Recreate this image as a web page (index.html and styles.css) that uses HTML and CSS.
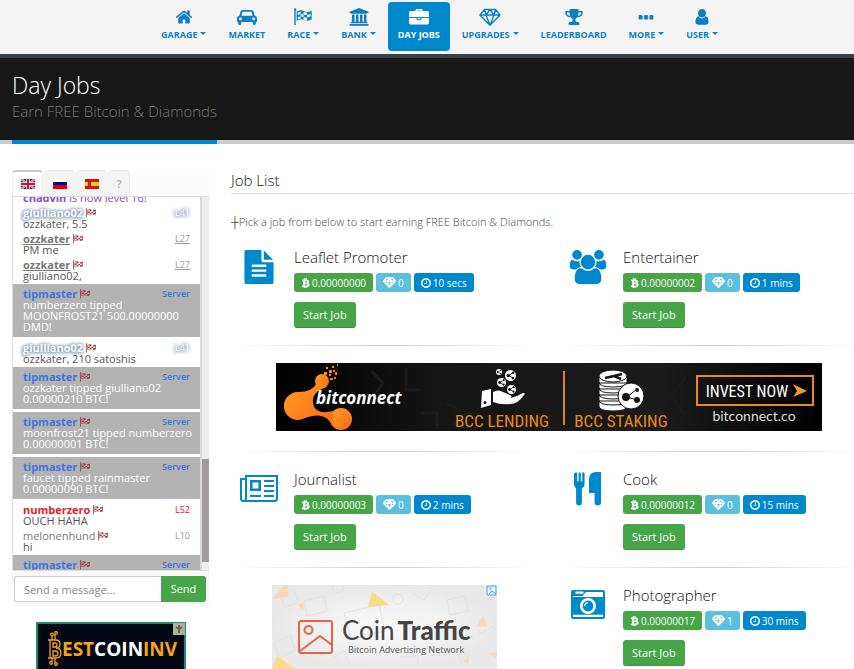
FILE: index.html
```html
<!DOCTYPE html>
<html lang="en">
<head>
<meta charset="utf-8">
<meta name="viewport" content="width=device-width, initial-scale=1">
<title>Day Jobs</title>
<link rel="stylesheet" href="styles.css">
</head>
<body>
<svg class="sprite" aria-hidden="true">
  <symbol id="home" viewBox="0 0 1792 1792"><path d="M1472 992v480q0 26-19 45t-45 19h-384v-384h-256v384h-384q-26 0-45-19t-19-45v-480q0-1 .5-3t.5-3l575-474 575 474q1 2 1 6zm223-69l-62 74q-8 9-21 11h-3q-13 0-21-7l-692-577-692 577q-12 8-24 7-13-2-21-11l-62-74q-8-10-7-23.5t11-21.5l719-599q32-26 76-26t76 26l244 204v-195q0-14 9-23t23-9h192q14 0 23 9t9 23v408l219 182q10 8 11 21.5t-7 23.5z"/></symbol>
  <symbol id="car" viewBox="0 0 20 18"><path fill-rule="evenodd" d="M5.500 2h9q1.600 0 2 1.500l1.200 4.300Q20 8 20 10.300V14h-1.200v1.500a1.500 1.500 0 0 1-3 0V14H4.200v1.500a1.500 1.500 0 0 1-3 0V14H0v-3.700Q0 8 2.300 7.800L3.500 3.500Q3.900 2 5.500 2zM4.500 7.800h11l-.9-3.600q-.1-.4-.5-.4H5.900q-.4 0-.5.4zM3.400 9.500a1.400 1.400 0 1 0 0 2.800 1.400 1.400 0 0 0 0-2.800zm13.200 0a1.400 1.400 0 1 0 0 2.800 1.400 1.400 0 0 0 0-2.800z"/></symbol>
  <symbol id="flag" viewBox="0 0 20 18"><path d="M1 1.500a1.200 1.200 0 1 1 1.700 1.100V17H1.300V2.600z"/><path fill-rule="evenodd" d="M3.600 3.600Q8 1 11 3t7.700-.3v8.600Q15 13.800 11.500 12t-7.900.8zM4.700 4.400v2.500l3-1V3.500zM10.500 4v2.600l3.500.5V4.400zM7.700 5.900v2.700l2.900.5V6.500zM14 7.100v2.500l3.500-1.200V6zM4.700 9v2.400l3-1V8.600zM10.600 9.100v2.500l3.400.8V9.700z"/></symbol>
  <symbol id="bank" viewBox="0 0 20 18"><path d="M10 0l9.500 3.700V5h-1.300q0 .7-.8.7H2.600q-.8 0-.8-.7H.5V3.700zM3 6.500h2.600v7.300H7V6.500h2.500v7.300H11V6.500h2.500v7.300H15V6.500h2.500v7.300q.7 0 .7.700v.6H1.800v-.6q0-.7.700-.7H3zM1.200 15.800h17.600q.7 0 .7.700v1.300H.5v-1.300q0-.7.700-.7z"/></symbol>
  <symbol id="case" viewBox="0 0 20 18"><path fill-rule="evenodd" d="M6.500 3V2Q6.500 1 7.500 1h5q1 0 1 1v1h4.700Q20 3 20 4.800V9H0V4.800Q0 3 1.800 3zM8 3h4v-.6H8zM0 10h7.500v1.500q0 .7.700.7h3.600q.7 0 .7-.7V10H20v4.700q0 1.800-1.800 1.800H1.800Q0 16.500 0 14.700zM8.700 10h2.600v1.200H8.700z"/></symbol>
  <symbol id="gem" viewBox="0 0 22 18"><path fill="none" stroke="currentColor" stroke-width="1.400" stroke-linejoin="round" d="M5.500 1.500h11l4.500 5.500-10 10.200L1 7zM1 7h20M5.500 1.500L7 7l4 10.200L15 7l1.500-5.500M7 7l4-5.500L15 7"/></symbol>
  <symbol id="gemb" viewBox="0 0 22 18"><path fill="none" stroke="currentColor" stroke-width="2.400" stroke-linejoin="round" d="M5.500 1.500h11l4.500 5.500-10 10.200L1 7zM1 7h20M7 7l4 10.200L15 7M7 7l4-5.500L15 7"/></symbol>
  <symbol id="cup" viewBox="0 0 20 18"><path fill-rule="evenodd" d="M5.500 3V1.800Q5.500 1 6.300 1h7.400q.8 0 .8.800V3h3.300q.9 0 .9.900v1.300c0 2.300-2.600 4-5.400 4.100-.9 1-1.900 1.500-1.900 2.900 0 1 .6 1.500 1.700 1.500 1.500 0 2.300.8 2.300 2v.8q0 .4-.4.4H5q-.4 0-.4-.4v-.8c0-1.200.8-2 2.300-2 1.100 0 1.700-.5 1.700-1.500 0-1.400-1-1.900-1.900-2.900-2.800-.1-5.400-1.800-5.400-4.100V3.900q0-.9.9-.9zm0 1.500H2.800v.7c0 .9 1.300 2.200 3.200 2.600-.4-1-.5-2-.5-3.300zm9 0c0 1.300-.1 2.300-.5 3.300 1.900-.4 3.200-1.700 3.200-2.600v-.7z"/></symbol>
  <symbol id="dots" viewBox="0 0 20 18"><path d="M3 7.500h3.200v3.600H3zm5.300 0h3.400v3.600H8.300zm5.500 0H17v3.600h-3.200z" stroke="currentColor" stroke-width=".8" stroke-linejoin="round"/></symbol>
  <symbol id="user" viewBox="0 0 20 18"><path d="M10 1a4 4 0 0 1 4 4.200c0 2.400-1.700 4.300-4 4.300S6 7.600 6 5.200A4 4 0 0 1 10 1zM6.600 8.300Q8 10.500 10 10.500t3.400-2.200c2.300.2 3.100 2.600 3.100 5.700 0 1.700-1.100 2.800-2.700 2.800H6.200c-1.600 0-2.700-1.100-2.700-2.800 0-3.100.8-5.500 3.100-5.700z"/></symbol>
  <symbol id="file" viewBox="128 0 1536 1792"><path d="M1596 476q14 14 28 36h-472v-472q22 14 36 28zm-476 164h544v1056q0 40-28 68t-68 28h-1344q-40 0-68-28t-28-68v-1600q0-40 28-68t68-28h800v544q0 40 28 68t68 28zm160 736v-64q0-14-9-23t-23-9h-704q-14 0-23 9t-9 23v64q0 14 9 23t23 9h704q14 0 23-9t9-23zm0-256v-64q0-14-9-23t-23-9h-704q-14 0-23 9t-9 23v64q0 14 9 23t23 9h704q14 0 23-9t9-23zm0-256v-64q0-14-9-23t-23-9h-704q-14 0-23 9t-9 23v64q0 14 9 23t23 9h704q14 0 23-9t9-23z"/></symbol>
  <symbol id="users" viewBox="64 0 1920 1792"><path d="M657 896q-162 5-265 128h-134q-82 0-138-40.500t-56-118.500q0-353 124-353 6 0 43.500 21t97.500 42.500 119 21.500q67 0 133-23-5 37-5 66 0 139 81 256zm1071 637q0 120-73 189.500t-194 69.500h-874q-121 0-194-69.500t-73-189.500q0-53 3.500-103.500t14-109 26.500-108.500 43-97.500 62-81 85.500-53.500 111.500-20q10 0 43 21.500t73 48 107 48 135 21.500 135-21.500 107-48 73-48 43-21.500q61 0 111.500 20t85.500 53.500 62 81 43 97.500 26.500 108.500 14 109 3.500 103.500zm-1024-1277q0 106-75 181t-181 75-181-75-75-181 75-181 181-75 181 75 75 181zm704 384q0 159-112.500 271.500t-271.500 112.500-271.500-112.500-112.500-271.500 112.500-271.500 271.500-112.500 271.500 112.500 112.500 271.500zm576 225q0 78-56 118.500t-138 40.500h-134q-103-123-265-128 81-117 81-256 0-29-5-66 66 23 133 23 59 0 119-21.500t97.500-42.500 43.500-21q124 0 124 353zm-128-609q0 106-75 181t-181 75-181-75-75-181 75-181 181-75 181 75 75 181z"/></symbol>
  <symbol id="news" viewBox="0 0 38 28"><path fill="none" stroke="currentColor" stroke-width="2" d="M5.500 4H1v19.500a2.500 2.500 0 0 0 5 0V1h31v22.500q0 2.500-2.500 2.500h-31"/><path fill="none" stroke="currentColor" stroke-width="2.600" d="M11.300 6.300h8.400v8.400h-8.400z"/><path d="M24 5h10v2H24zm0 5h10v2H24zm0 5h10v2H24zM10 20h11v2H10zm14 0h10v2H24z"/></symbol>
  <symbol id="fork" viewBox="0 0 28 34"><path d="M1 1q1.200-1.500 2.200 0v8q.7 1 1.400 0V1q1.200-1.500 2.200 0v8q.7 1 1.400 0V1Q9.600-.5 10.600 1v11q0 3-2.700 4v14.500q0 3-2.900 3t-2.900-3V16Q0 15 0 12V1zM27 0v30.500q0 3-3.200 3t-3.200-3V21H15V7.500Q15 0 22 0z"/></symbol>
  <symbol id="camera" viewBox="0 0 34 30"><path fill-rule="evenodd" d="M2 0h30q2 0 2 2v25q0 2-2 2H2q-2 0-2-2V2q0-2 2-2zm2.500 1.500v2.300h8V1.500zM2 7h9l3-4h18V2H15l-3 4H2zm0 17.700v2.300h30v-2.300zM17 8a8 8 0 1 0 0 16 8 8 0 0 0 0-16zm0 2.600a5.400 5.400 0 1 1 0 10.800 5.400 5.400 0 0 1 0-10.800z"/><path fill="#fff" d="M14 3h18v4H11z"/><path fill="none" stroke="#fff" stroke-width="1.200" d="M13.600 16a3.400 3.400 0 0 1 3.400-3.400"/></symbol>
  <symbol id="btc" viewBox="200 0 1350 1792"><path stroke="currentColor" stroke-width="60" d="M1422 722q18 182-131 258 117 28 175 103t45 214q-7 71-32.500 125t-64.500 89-97 58.500-121.500 34.500-145.500 15v255h-154v-251q-80 0-122-1v252h-154v-255q-18 0-54-.5t-55-.5h-200l31-183h111q50 0 58-51v-402h16q-6-1-16-1v-287q-13-68-89-68h-111v-164l212 1q64 0 97-1v-252h154v247q82-2 122-2v-245h154v252q79 7 140 22.500t113 45 82.500 78 36.500 114.500zm-215 545q0-36-15-64t-37-46-57.500-30.500-65.500-18.500-74-9-69-3-64.500 1-47.500 1v338q8 0 37 .5t48 .5 53-1.500 58.500-4 57-8.500 55.500-14 47.500-21 39.500-30 24.500-40 9.500-51zm-71-476q0-33-12.500-58.500t-30.500-42-48-28-55-16.500-61.500-8-58-2.500-54 1-39.500.5v307q5 0 34.500.5t46.500 0 50-2 55-5.500 51.500-11 48.500-18.500 37-27 27-38.500 9-51z"/></symbol>
  <symbol id="clock" viewBox="128 128 1536 1536"><path d="M1024 544v448q0 14-9 23t-23 9h-320q-14 0-23-9t-9-23v-64q0-14 9-23t23-9h224v-352q0-14 9-23t23-9h64q14 0 23 9t9 23zm416 352q0-148-73-273t-198-198-273-73-273 73-198 198-73 273 73 273 198 198 273 73 273-73 198-198 73-273zm224 0q0 209-103 385.500t-279.500 279.500-385.500 103-385.500-103-279.500-279.500-103-385.500 103-385.500 279.500-279.500 385.500-103 385.500 103 279.500 279.500 103 385.500z"/></symbol>
  <symbol id="node" viewBox="0 0 12 12"><circle cx="6" cy="6" r="6" fill="#fff"/><path d="M9 2.500L4 6l5 3" fill="none" stroke="#111" stroke-width="1"/><circle cx="9" cy="3" r="1.300" fill="#111"/><circle cx="3.500" cy="6" r="1.900" fill="#111"/><circle cx="8.700" cy="8.800" r="1.500" fill="#111"/></symbol>
</svg>

<header>
  <nav class="nav">
    <a href="#"><svg><use href="#home"/></svg><span class="caret">Garage</span></a>
    <a href="#"><svg><use href="#car"/></svg><span>Market</span></a>
    <a href="#"><svg><use href="#flag"/></svg><span class="caret">Race</span></a>
    <a href="#"><svg><use href="#bank"/></svg><span class="caret">Bank</span></a>
    <a href="#" class="active"><svg><use href="#case"/></svg><span>Day Jobs</span></a>
    <a href="#"><svg><use href="#gem"/></svg><span class="caret">Upgrades</span></a>
    <a href="#"><svg><use href="#cup"/></svg><span>Leaderboard</span></a>
    <a href="#"><svg><use href="#dots"/></svg><span class="caret">More</span></a>
    <a href="#"><svg><use href="#user"/></svg><span class="caret">User</span></a>
  </nav>
  <div class="hero">
    <div class="hero-title">
      <h1>Day Jobs</h1>
      <p>Earn FREE Bitcoin &amp; Diamonds</p>
    </div>
  </div>
</header>

<div class="page">
  <aside>
    <section class="chat" aria-label="Chat">
      <div class="tabs">
        <button class="on" aria-label="English"><svg class="lang" viewBox="0 0 14 10"><path fill="#00247d" d="M0 0h14v10H0z"/><path stroke="#fff" stroke-width="2" d="M0 0l14 10M14 0L0 10"/><path stroke="#cf142b" stroke-width=".8" d="M0 0l14 10M14 0L0 10"/><path stroke="#fff" stroke-width="3.400" d="M7 0v10M0 5h14"/><path stroke="#cf142b" stroke-width="2" d="M7 0v10M0 5h14"/></svg></button>
        <button aria-label="Russian"><svg class="lang" viewBox="0 0 14 10"><path fill="#fff" d="M0 0h14v4H0z"/><path fill="#00a" d="M0 3h14v4H0z"/><path fill="#e00000" d="M0 6h14v4H0z"/></svg></button>
        <button aria-label="Spanish"><svg class="lang" viewBox="0 0 14 10"><path fill="#d81010" d="M0 0h14v10H0z"/><path fill="#ffc400" d="M0 3h14v4H0z"/><path fill="#a03010" d="M3 3h3v4H3z"/></svg></button>
        <button class="help">?</button>
      </div>
      <div class="log">
        <ul>
          <li><p class="level"><b>chadvin</b> is now level 16!</p></li>
          <li class="glow"><div><b>giulliano02</b><svg><use href="#flag"/></svg><i>L41</i></div><p>ozzkater, 5.5</p></li>
          <li class="mod"><div><b>ozzkater</b><svg><use href="#flag"/></svg><i>L27</i></div><p>PM me</p></li>
          <li class="mod"><div><b>ozzkater</b><svg><use href="#flag"/></svg><i>L27</i></div><p>giulliano02,</p></li>
          <li class="server"><div><b>tipmaster</b><svg><use href="#flag"/></svg><i>Server</i></div><p>numberzero tipped MOONFROST21 500.00000000 DMD!</p></li>
          <li class="glow"><div><b>giulliano02</b><svg><use href="#flag"/></svg><i>L41</i></div><p>ozzkater, 210 satoshis</p></li>
          <li class="server"><div><b>tipmaster</b><svg><use href="#flag"/></svg><i>Server</i></div><p>ozzkater tipped giulliano02 0.00000210 BTC!</p></li>
          <li class="server"><div><b>tipmaster</b><svg><use href="#flag"/></svg><i>Server</i></div><p>moonfrost21 tipped numberzero 0.00000001 BTC!</p></li>
          <li class="server"><div><b>tipmaster</b><svg><use href="#flag"/></svg><i>Server</i></div><p>faucet tipped rainmaster 0.00000090 BTC!</p></li>
          <li class="red"><div><b>numberzero</b><svg><use href="#flag"/></svg><i>L52</i></div><p>OUCH HAHA</p></li>
          <li><div><span>melonenhund</span><svg><use href="#flag"/></svg><i>L10</i></div><p>hi</p></li>
          <li class="server"><div><b>tipmaster</b><svg><use href="#flag"/></svg><i>Server</i></div></li>
        </ul>
        <div class="track"><div class="thumb"></div></div>
      </div>
      <form class="send">
        <input type="text" placeholder="Send a message..." aria-label="Message">
        <button type="button">Send</button>
      </form>
    </section>
    <a class="ad-best" href="#">
      <svg viewBox="0 0 150 47" role="img" aria-label="BestCoinInv">
        <path fill="#040814" stroke="#1d8a74" stroke-width="2" d="M1 1h148v50H1z"/>
        <path fill="#a9b59a" d="M137 1h12v12h-12z"/><path d="M143 3v8M140 5l3 2 3-2" stroke="#71634f" fill="none" stroke-width="2"/>
        <g fill="none" stroke="#f7a21b" stroke-width="1.300"><path d="M12 18h8q4 0 4 4t-4 4q5 0 5 5t-5 5h-8M14 18v18M17 21h2q2 0 2 2t-2 2h-2zM17 29h2q3 0 3 2.500T19 34h-2zM16 18v-4M19 18v-6M16 36v4M19 36v5"/><circle cx="16" cy="12.500" r="1.300"/><circle cx="20" cy="11" r="1.300"/><circle cx="15" cy="41" r="1.300"/><circle cx="20" cy="42" r="1.300"/></g>
        <text x="26" y="34" class="best"><tspan fill="#f7a21b">EST</tspan><tspan fill="#fff">COIN</tspan><tspan fill="#f7a21b">INV</tspan></text>
      </svg>
    </a>
  </aside>

  <main>
    <h2>Job List</h2>
    <p class="intro">┼Pick a job from below to start earning FREE Bitcoin &amp; Diamonds.</p>
    <div class="jobs">
      <article class="job">
        <svg class="icon i-file"><use href="#file"/></svg>
        <div><h3>Leaflet Promoter</h3>
          <div class="tags"><span class="btc"><svg><use href="#btc"/></svg>0.00000000</span><span class="gem"><svg><use href="#gemb"/></svg>0</span><span class="time"><svg><use href="#clock"/></svg>10 secs</span></div>
          <button>Start Job</button></div>
      </article>
      <article class="job">
        <svg class="icon i-users"><use href="#users"/></svg>
        <div><h3>Entertainer</h3>
          <div class="tags"><span class="btc"><svg><use href="#btc"/></svg>0.00000002</span><span class="gem"><svg><use href="#gemb"/></svg>0</span><span class="time"><svg><use href="#clock"/></svg>1 mins</span></div>
          <button>Start Job</button></div>
      </article>
      <hr><hr>
      <a class="banner" href="#">
        <svg viewBox="0 0 546 68" role="img" aria-label="Bitconnect">
          <defs><linearGradient id="bg"><stop offset="0" stop-color="#000"/><stop offset=".3" stop-color="#151515"/><stop offset=".7" stop-color="#1b1b1b"/><stop offset="1" stop-color="#000"/></linearGradient><linearGradient id="or" x2="1" y2="1"><stop offset="0" stop-color="#ffa01f"/><stop offset="1" stop-color="#f9681c"/></linearGradient></defs>
          <path fill="url(#bg)" d="M0 0h546v68H0z"/>
          <g fill="none" stroke="#1b1b1b" stroke-width="3"><path d="M95 8l12 12-10 14M130 5v22h14M170 40l20 10-12 12M145 50h16v14M340 8l-12 10 14 12M410 14l-14 18 12 20"/></g>
          <g fill="url(#or)"><circle cx="46" cy="18" r="7"/><circle cx="65" cy="56" r="11"/><path d="M22 29c10 0 17-3 20-12l9 7c-10 3-15 8-14 16 1 8 8 11 20 8l-1 15c-4-11-14-13-27-8a14 14 0 1 1-7-26z"/><path d="M48 9h3v3h-3zm5-2h3v3h-3zm3-4h2v2h-2zm3 6h2v3h-2zm-5 6h3v2h-3zm4-1h2v2h-2zM50 4h2v2h-2zm11-3h1v2h-1zm-8 10h2v2h-2zm4-4h2v2h-2z"/></g>
          <text x="40" y="41" class="brand">bitconnect</text>
          <use href="#node" x="220" y="6" width="6" height="6"/><use href="#node" x="229" y="7" width="11" height="11"/><use href="#node" x="221" y="15" width="9" height="9"/><use href="#node" x="231" y="22" width="9" height="9"/>
          <path fill="#fff" fill-rule="evenodd" d="M206 28l9-2v16l-10 3zM209 38a1.300 1.300 0 1 0 0 3 1.300 1.300 0 0 0 0-3zM217 29q5-3 10 0l7 3q3 2 0 3h-8 9q7-2 12-5 3 0 1 2-6 9-14 9-9 1-17-2z"/>
          <text x="226" y="64" class="bcc">BCC LENDING</text>
          <path fill="#d98226" d="M287 8h2v54h-2z"/>
          <g fill="#fff" stroke="#151515"><path d="M323 38v5q0 5 14 5t14-5v-5zM323 32v5q0 5 14 5t14-5v-5zM323 26v5q0 5 14 5t14-5v-5zM323 20v5q0 5 14 5t14-5v-5zM323 14v5q0 5 14 5t14-5v-5z"/><ellipse cx="337" cy="13" rx="14" ry="6"/><circle cx="355" cy="33" r="13"/></g>
          <path d="M329 15l9-2 8-2M338 13l7 3" stroke="#151515" stroke-width="2.500"/><path d="M361 26l-10 8 10 3" fill="none" stroke="#151515"/><g fill="#151515"><circle cx="350" cy="34" r="4"/><circle cx="361" cy="27" r="2"/><circle cx="361" cy="37" r="3"/></g>
          <text x="345" y="64" class="bcc">BCC STAKING</text>
          <path fill="none" stroke="#e88b1c" stroke-width="2" d="M421 13h116v29H421z"/>
          <text x="471" y="34" class="invest">INVEST NOW</text>
          <path fill="#f29a25" d="M517 21l14 7-14 6 4-6z"/>
          <text x="478" y="58" class="url">bitconnect.co</text>
        </svg>
      </a>
      <hr><hr>
      <article class="job">
        <svg class="icon i-news"><use href="#news"/></svg>
        <div><h3>Journalist</h3>
          <div class="tags"><span class="btc"><svg><use href="#btc"/></svg>0.00000003</span><span class="gem"><svg><use href="#gemb"/></svg>0</span><span class="time"><svg><use href="#clock"/></svg>2 mins</span></div>
          <button>Start Job</button></div>
      </article>
      <article class="job">
        <svg class="icon i-fork"><use href="#fork"/></svg>
        <div><h3>Cook</h3>
          <div class="tags"><span class="btc"><svg><use href="#btc"/></svg>0.00000012</span><span class="gem"><svg><use href="#gemb"/></svg>0</span><span class="time"><svg><use href="#clock"/></svg>15 mins</span></div>
          <button>Start Job</button></div>
      </article>
      <hr><hr>
      <a class="ad-coin" href="#">
        <svg viewBox="0 0 225 84" role="img" aria-label="CoinTraffic">
          <defs><radialGradient id="pale"><stop offset="0" stop-color="#fafafa"/><stop offset="1" stop-color="#e9e9e9"/></radialGradient></defs>
          <path fill="url(#pale)" d="M0 0h225v84H0z"/>
          <g fill="none" stroke="#e2e2e2"><path d="M8 8l14-4 4 14-14 4zM32 16l20-5 3 15-20 5zM72 28l35-8 6 26-34 8zM140 8l12 7 9-11M175 15l18-4 3 15-18 4zM206 50l16-9 6 14M2 58l16-8 5 15-15 8zM60 74l12-8 6 14M128 72h18v10M172 70l14-4 4 14"/><circle cx="66" cy="3" r="5"/><circle cx="126" cy="14" r="5"/></g>
          <path fill="#f8dc8c" d="M100 6l17 14-21 2zM0 84l5-13 19 13z"/><path fill="#f8d8bc" d="M0 14L12 0h4v12zM26 20l6-3-1 9zM205 42l6-12 4 11zM217 69l8 4v-7zM191 76l6-6v9z"/>
          <path fill="#e7f3fa" stroke="#4aa8dc" d="M215 1h9v9h-9z"/><path fill="none" stroke="#4aa8dc" d="M217 9l3-3 4 3M217 3h2v2"/>
          <g fill="none" stroke="#ea6248" stroke-width="2"><rect x="27" y="36" width="33" height="32" rx="2"/><circle cx="36.500" cy="45" r="4"/><path d="M28 66l20-15 12 9"/></g>
          <text x="70" y="55" class="coin">Coin<tspan class="traffic" dx="3">Traffic</tspan></text>
          <text x="76" y="68" class="network">Bitcoin Advertising Network</text>
        </svg>
      </a>
      <article class="job">
        <svg class="icon i-camera"><use href="#camera"/></svg>
        <div><h3>Photographer</h3>
          <div class="tags"><span class="btc"><svg><use href="#btc"/></svg>0.00000017</span><span class="gem"><svg><use href="#gemb"/></svg>1</span><span class="time"><svg><use href="#clock"/></svg>30 mins</span></div>
          <button>Start Job</button></div>
      </article>
    </div>
  </main>
</div>
</body>
</html>
```
FILE: styles.css
```css
* { box-sizing: border-box; }
body { margin: 0; background: #fff; color: #777; font: 11px/16px "Open Sans", sans-serif; overflow-x: hidden; }
h1, h2, h3, p, ul { margin: 0; padding: 0; font-weight: 400; }
a { text-decoration: none; }
button, input { font: inherit; }
svg { fill: currentColor; flex: none; }
.sprite { position: absolute; width: 0; height: 0; }

/* top navigation */
.nav { display: flex; justify-content: center; gap: 2px; padding: 2px 0 3px 25px; background: #f4f4f4; }
.nav a { display: flex; flex-direction: column; align-items: center; gap: 2px; height: 49px; padding: 6px 10px 0; border-radius: 4px; color: #0f7fc4; font-size: 9px; line-height: 14px; font-weight: 700; text-transform: uppercase; }
.nav svg { width: 22px; height: 18px; }
.nav .active { background: #08c; color: #fff; }
.caret::after { content: ""; display: inline-block; margin-left: 3px; vertical-align: 3px; border: 3px solid transparent; border-top-color: currentColor; border-bottom: 0; }

/* page heading */
.hero { display: flex; height: 90px; padding: 14px 12px 0; background: #171717; border-top: 4px solid #383f48; box-shadow: inset 0 -4px #ccc; }
.hero-title { height: 72px; border-bottom: 4px solid #08c; }
h1 { color: #fff; font-size: 23px; line-height: 27px; font-weight: 300; }
.hero-title p { font-size: 15px; line-height: 24px; font-weight: 300; }

.page { display: flex; gap: 11px; padding-left: 12px; }
aside { width: 197px; padding-top: 26px; flex: none; }

/* chat */
.chat { background: #f8f8f8; border-radius: 4px; padding-bottom: 4px; }
.tabs { display: flex; gap: 1px; background: #fcfcfc; }
.tabs button { display: flex; align-items: center; justify-content: center; width: 31px; height: 26px; padding: 0; border: 1px solid #eee; border-bottom: 0; border-radius: 4px 4px 0 0; background: #f4f4f4; color: #bbb; font-weight: 700; }
.tabs .on { background: #fff; border-top: 2px solid #ccc; }
.tabs .help { width: 22px; }
.lang { width: 14px; height: 10px; }
.log { display: flex; height: 375px; overflow: hidden; border: 1px solid #ddd; border-width: 1px 0 1px 1px; background: #fff; }
.log ul { flex: 1; margin-top: -7px; list-style: none; line-height: 11px; }
.log li { padding: 2px 10px; color: #555; }
.log li p { margin-right: -8px; }
.log li div { display: flex; align-items: center; gap: 2px; height: 11px; color: #777; }
.log li svg { width: 12px; height: 10px; color: #a0383a; }
.log i { margin-left: auto; font-style: normal; font-size: 9px; color: #999; }
.log .level { color: #8050c8; }
.log .mod b, .log .mod i { text-decoration: underline; }
.log .glow b, .log .glow i { color: #fff; text-shadow: 0 0 3px #6f87a4, 0 0 4px #8aa0b8, -1px 1px 4px #8aa0b8; }
.log .red b, .log .red i { color: #e0202c; }
.log .server { margin: 1px 0 3px; padding: 4px 10px 5px; background: #b3b3b3; color: #fff; }
.log .server b { color: #3f74e0; }
.log .server i { color: #3f74e0; font-weight: 600; }
.track { width: 9px; background: #eee; border-left: 2px solid #d8d8d8; padding-top: 262px; }
.thumb { height: 103px; background: #a09c9c; }
.send { display: flex; margin: 5px 3px 0 2px; }
.send input { flex: 1; min-width: 0; height: 26px; padding: 0 9px; border: 1px solid #ccc; border-right: 0; border-radius: 3px 0 0 3px; background: #fff; }
.send input::placeholder { color: #888; }
.send button { width: 45px; border: 0; border-radius: 0 3px 3px 0; background: #47a447; color: #fff; padding: 0; }
.ad-best { display: block; width: 150px; margin: 16px auto 0; }
.ad-best svg, .ad-coin svg, .banner svg { display: block; width: 100%; }
.best { font: 700 19px "Open Sans", sans-serif; }

/* job list */
main { flex: 1; min-width: 0; margin-right: -24px; padding-top: 26px; }
h2 { margin-left: 11px; padding-bottom: 2px; border-bottom: 1px solid #ddd; color: #111; font-size: 15px; line-height: 21px; font-weight: 300; }
.intro { margin: 20px 0 17px 11px; color: #444; font-weight: 300; }
.jobs { display: grid; grid-template-columns: 1fr 1fr; }
.job { display: flex; gap: 11px; padding: 0 15px; }
.icon { width: 48px; margin-top: 3px; color: #08c; }
.i-file, .i-users, .i-fork { height: 34px; }
.i-news { height: 28px; margin-top: 6px; }
.i-camera { height: 30px; margin-top: 5px; }
h3 { color: #111; font-size: 15px; line-height: 20px; font-weight: 300; }
.tags { display: flex; gap: 3px; margin: 6px 0 10px; font-size: 10px; }
.tags span { display: flex; align-items: center; gap: 2px; height: 19px; padding: 0 7px; border-radius: 3px; color: #fff; }
.btc { background: #47a447; }
.gem { background: #5bc0de; }
.time { background: #08c; }
.tags svg { width: 10px; height: 10px; }
.tags .btc svg { width: 9px; height: 11px; }
.tags .gem svg { width: 13px; height: 11px; }
.job button { display: block; height: 26px; padding: 0 9px; border: 0; border-bottom: 1px solid #3b903b; border-radius: 3px; background: #47a447; color: #fff; }
hr { width: calc(100% - 30px); height: 1px; margin: 17px 15px; border: 0; background: linear-gradient(90deg, transparent, #ccc, transparent); }
.banner { grid-column: 1 / -1; justify-self: center; width: 546px; max-width: 100%; margin-bottom: 3px; }
.brand { fill: #fff; font: italic 700 17px "Open Sans", sans-serif; }
.bcc { fill: #e88b1c; font: 17px "Liberation Sans Narrow", "Roboto Condensed", "Open Sans Condensed", sans-serif; text-anchor: middle; }
.invest { fill: #fff; font: 16px "Liberation Sans Narrow", "Roboto Condensed", "Open Sans Condensed", sans-serif; text-anchor: middle; }
.url { fill: #ddd; font: 14px Lato, sans-serif; text-anchor: middle; }
.ad-coin { justify-self: center; width: 225px; }
.coin { fill: #444; font: 26px Lato, sans-serif; }
.traffic { font-weight: 900; }
.network { fill: #555; font: 9px "Open Sans", sans-serif; }
```
